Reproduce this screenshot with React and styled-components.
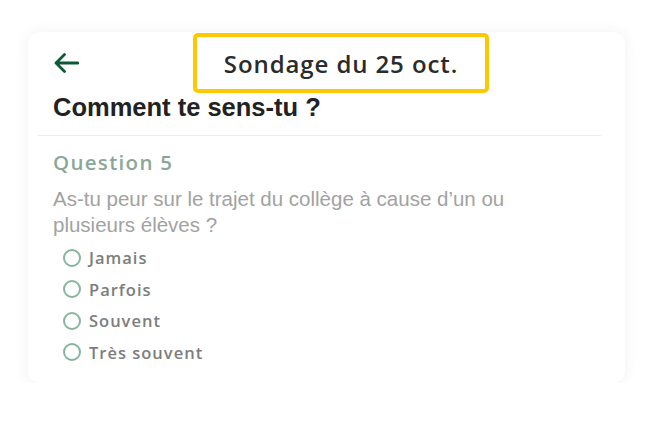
import React, { useState } from 'react';
import styled, { createGlobalStyle } from 'styled-components';

const GlobalStyle = createGlobalStyle`
  body {
    margin: 0;
    background: #fff;
    font-family: "Liberation Sans", Arial, sans-serif;
  }
`;

const options = ['Jamais', 'Parfois', 'Souvent', 'Très souvent'];

const App = () => {
  const [choice, setChoice] = useState(null);

  return (
    <>
      <GlobalStyle />
      <Page>
        <Card>
          <Header>
            <BackButton aria-label="Retour">
              <svg width="26" height="20" viewBox="0 0 26 20" fill="none">
                <path d="M3 10H25M11.5 1.5L3 10l8.5 8.5" stroke="#0b5a33" strokeWidth="2.8" strokeLinecap="round" strokeLinejoin="round" />
              </svg>
            </BackButton>
            <TitleBox>Sondage du 25 oct.</TitleBox>
          </Header>
          <Heading>Comment te sens-tu ?</Heading>
          <Divider />
          <Body>
            <QuestionLabel>Question 5</QuestionLabel>
            <QuestionText>
              As-tu peur sur le trajet du collège à cause d’un ou plusieurs élèves ?
            </QuestionText>
            <Options>
              {options.map((o) => (
                <Option key={o} onClick={() => setChoice(o)}>
                  <Radio $checked={choice === o} />
                  {o}
                </Option>
              ))}
            </Options>
          </Body>
        </Card>
      </Page>
    </>
  );
};

export default App;

const Page = styled.div`
  padding: 32px 26px 0 28px;
  width: 597px;
`;

const Card = styled.div`
  background: #fff;
  border-radius: 12px;
  box-shadow: 0 0 14px rgba(40, 50, 120, 0.07);
  height: 351px;
  box-sizing: border-box;
`;

const Header = styled.div`
  display: flex;
  align-items: center;
  padding: 1px 0 0 25px;
`;

const BackButton = styled.button`
  display: flex;
  border: none;
  background: none;
  padding: 0;
  width: 26px;
  height: 20px;
  cursor: pointer;
`;

const TitleBox = styled.div`
  margin-left: 114px;
  width: 296px;
  height: 60px;
  box-sizing: border-box;
  border: 4px solid #fdc800;
  border-radius: 5px;
  display: flex;
  align-items: center;
  justify-content: center;
  font-family: "Open Sans", sans-serif;
  font-weight: 600;
  font-size: 24px;
  letter-spacing: 0.9px;
  color: #2b2b2b;
`;

const Heading = styled.h1`
  margin: 0;
  padding: 0 0 0 25px;
  font-size: 25.5px;
  line-height: 28px;
  font-weight: 700;
  color: #222;
`;

const Divider = styled.hr`
  margin: 14px 24px 0 10px;
  border: none;
  border-top: 1px solid #ececec;
`;

const Body = styled.div`
  padding: 13px 40px 0 25px;
`;

const QuestionLabel = styled.h2`
  margin: 0;
  font-family: "Open Sans", sans-serif;
  font-weight: 600;
  font-size: 20.5px;
  letter-spacing: 1.3px;
  line-height: 26px;
  color: #8aa897;
`;

const QuestionText = styled.p`
  margin: 11px 0 0;
  font-size: 20.5px;
  line-height: 26px;
  color: #a2a2a2;
`;

const Options = styled.div`
  display: flex;
  flex-direction: column;
  padding: 4px 0 0 10px;
`;

const Option = styled.label`
  display: flex;
  align-items: center;
  gap: 8px;
  height: 31.5px;
  font-family: "Open Sans", sans-serif;
  font-weight: 600;
  font-size: 16.5px;
  letter-spacing: 1px;
  color: #7d7d7d;
  cursor: pointer;
`;

const Radio = styled.span`
  width: 18px;
  height: 18px;
  box-sizing: border-box;
  border: 2px solid #86b59e;
  border-radius: 50%;
  background: ${(p) => (p.$checked ? '#86b59e' : '#fff')};
`;
